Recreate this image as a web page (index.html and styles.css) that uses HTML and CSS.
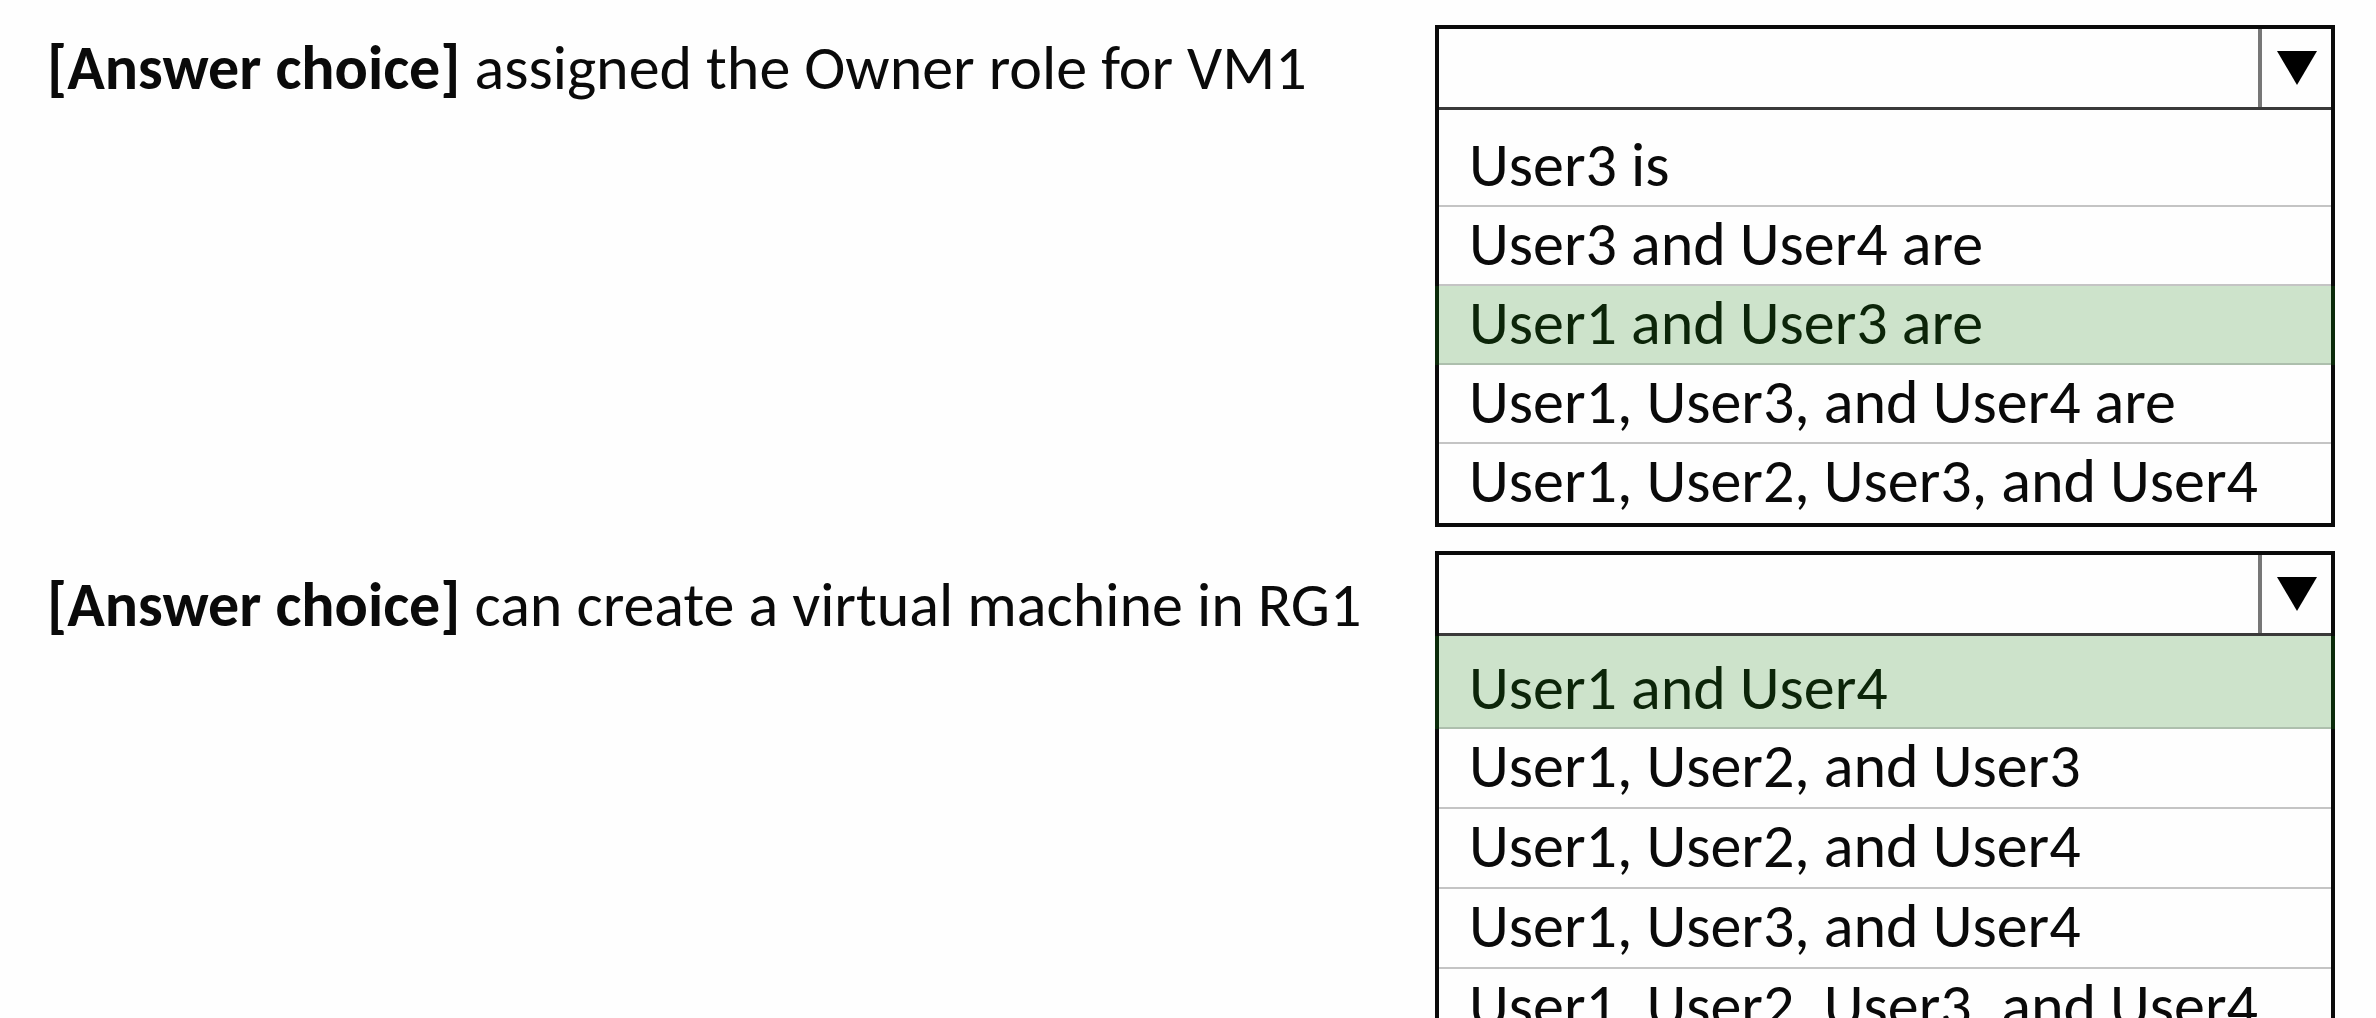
FILE: index.html
```html
<!DOCTYPE html>
<html lang="en">
<head>
  <meta charset="utf-8">
  <meta name="viewport" content="width=device-width, initial-scale=1">
  <title>Answer choices</title>
  <link rel="stylesheet" href="styles.css">
</head>
<body>
  <main class="questions">
    <section class="question">
      <label class="prompt" for="owner-role"><strong>[Answer choice]</strong> assigned the Owner role for VM1</label>
      <div class="dropdown">
        <div class="dropdown-head">
          <select class="dropdown-value" id="owner-role"><option value=""></option></select>
          <span class="dropdown-arrow" aria-hidden="true">
            <svg class="arrow-icon" viewBox="0 0 40 34"><path d="M0 0H40L20 34Z"/></svg>
          </span>
        </div>
        <ul class="options" role="listbox" aria-label="Owner role for VM1">
          <li class="option" role="option">User3 is</li>
          <li class="option" role="option">User3 and User4 are</li>
          <li class="option option-selected" role="option" aria-selected="true">User1 and User3 are</li>
          <li class="option" role="option">User1, User3, and User4 are</li>
          <li class="option" role="option">User1, User2, User3, and User4</li>
        </ul>
      </div>
    </section>

    <section class="question question-second">
      <label class="prompt" for="create-vm"><strong>[Answer choice]</strong> can create a virtual machine in RG1</label>
      <div class="dropdown">
        <div class="dropdown-head">
          <select class="dropdown-value" id="create-vm"><option value=""></option></select>
          <span class="dropdown-arrow" aria-hidden="true">
            <svg class="arrow-icon" viewBox="0 0 40 34"><path d="M0 0H40L20 34Z"/></svg>
          </span>
        </div>
        <ul class="options" role="listbox" aria-label="Virtual machine in RG1">
          <li class="option option-selected" role="option" aria-selected="true">User1 and User4</li>
          <li class="option" role="option">User1, User2, and User3</li>
          <li class="option" role="option">User1, User2, and User4</li>
          <li class="option" role="option">User1, User3, and User4</li>
          <li class="option" role="option">User1, User2, User3, and User4</li>
        </ul>
      </div>
    </section>
  </main>
</body>
</html>
```
FILE: styles.css
```css
* {
  box-sizing: border-box;
}

html {
  height: 100%;
  overflow: hidden;
}

body {
  height: 100%;
  margin: 0;
  overflow-y: auto;
  scrollbar-width: none;
  background: #fefefe;
  color: #0a0a0a;
  font-family: Carlito, Calibri, Lato, sans-serif;
  font-size: 62px;
  line-height: 74px;
}

.questions {
  display: flex;
  flex-direction: column;
  gap: 24px;
  padding: 25px 41px 25px 47px;
}

.question {
  display: grid;
  grid-template-columns: 1388fr 900fr;
  align-items: start;
}

.prompt {
  padding-top: 6px;
}

.question-second .prompt {
  padding-top: 17px;
}

.dropdown {
  border: 4px solid #0a0a0a;
}

.dropdown-head {
  display: flex;
  height: 81px;
  border-bottom: 3px solid #3a3a3a;
}

.dropdown-value {
  flex: 1;
  min-width: 0;
  border: 0;
  border-radius: 0;
  background: transparent;
  font: inherit;
  appearance: none;
}

.dropdown-arrow {
  display: flex;
  align-items: center;
  justify-content: center;
  width: 73px;
  border-left: 4px solid #777;
}

.arrow-icon {
  width: 40px;
  height: 34px;
  fill: #000;
}

.options {
  margin: 0;
  padding: 0;
  list-style: none;
}

.option {
  min-height: 79px;
  padding: 0 30px;
  border-bottom: 2px solid #c4c4c4;
}

.option:first-child {
  min-height: 97px;
  padding-top: 18px;
}

.option:last-child {
  border-bottom: 0;
}

.question-second .option {
  min-height: 80px;
}

.question-second .option:first-child {
  min-height: 93px;
  padding-top: 15px;
}

.option-selected {
  border-bottom-color: #adbfad;
  background: #cde3cb;
  box-shadow: -4px 0 #0b2a0a, 4px 0 #0b2a0a;
  color: #0c2509;
}
```
